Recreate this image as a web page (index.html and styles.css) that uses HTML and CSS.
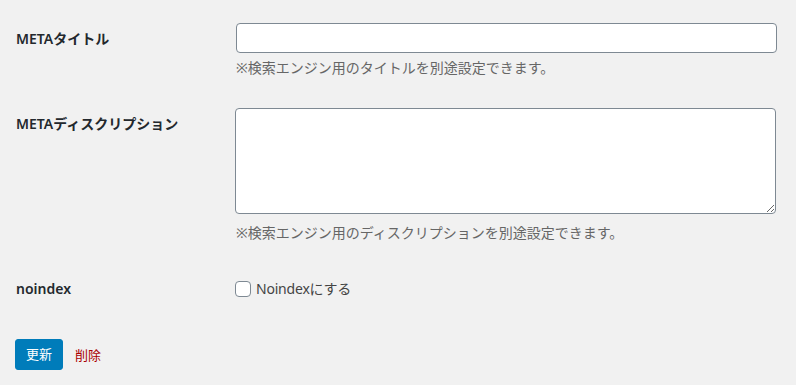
FILE: index.html
```html
<!DOCTYPE html>
<html lang="ja">
<head>
<meta charset="utf-8">
<title>META設定</title>
<link rel="stylesheet" href="styles.css">
</head>
<body>
<div class="wrap">
  <div class="form-table">
    <div class="row">
      <div class="th">METAタイトル</div>
      <div class="td">
        <input class="text-input" type="text">
        <p class="description">※検索エンジン用のタイトルを別途設定できます。</p>
      </div>
    </div>
    <div class="row">
      <div class="th">METAディスクリプション</div>
      <div class="td">
        <textarea class="text-area" rows="5"></textarea>
        <p class="description description-after-area">※検索エンジン用のディスクリプションを別途設定できます。</p>
      </div>
    </div>
    <div class="row">
      <div class="th">noindex</div>
      <div class="td td-check">
        <label class="check-label"><input class="checkbox" type="checkbox">Noindexにする</label>
      </div>
    </div>
  </div>
  <div class="submit">
    <button class="button-primary" type="button">更新</button>
    <a class="submitdelete" href="#">削除</a>
  </div>
</div>
</body>
</html>
```
FILE: styles.css
```css
html, body {
  margin: 0;
  padding: 0;
  background: #f1f1f1;
}
body {
  font-family: "Segoe UI", "Noto Sans", "Noto Sans CJK JP", sans-serif;
  font-size: 14px;
  color: #444;
}
.wrap {
  padding: 8px 9px 0 15px;
}
.row {
  display: grid;
  grid-template-columns: 211px 1fr;
}
.th {
  padding: 22px 10px 18px 1px;
  font-weight: 600;
  line-height: 1.3;
  color: #23282d;
}
.td {
  padding: 15px 10px;
}
.text-input {
  display: block;
  box-sizing: border-box;
  width: 100%;
  height: 30px;
  margin: 0;
  padding: 0 8px;
  border: 1px solid #7e8993;
  border-radius: 4px;
  background: #fff;
  font: inherit;
}
.text-area {
  display: block;
  box-sizing: border-box;
  width: 100%;
  height: 106px;
  margin: 0 0 0 -1px;
  padding: 2px 6px;
  border: 1px solid #7e8993;
  border-radius: 4px;
  background: #fff;
  font: inherit;
  line-height: 1.42857143;
}
.description {
  margin: 4px 0 0;
  line-height: 1.5;
  color: #666;
}
.description-after-area {
  margin-top: 8px;
}
.td-check {
  padding-top: 20px;
}
.check-label {
  display: flex;
  align-items: center;
  line-height: 21px;
  color: #444;
  margin-left: -1px;
  letter-spacing: -0.2px;
}
.checkbox {
  appearance: none;
  -webkit-appearance: none;
  box-sizing: border-box;
  width: 16px;
  height: 16px;
  margin: 0 5px 0 0;
  border: 1px solid #7e8993;
  border-radius: 4px;
  background: #fff;
}
.submit {
  display: flex;
  align-items: center;
  gap: 12px;
  padding-top: 23px;
}
.button-primary {
  box-sizing: border-box;
  height: 31px;
  padding: 0 10px;
  border: 1px solid #007cba;
  border-radius: 3px;
  background: #007cba;
  color: #fff;
  font: inherit;
  font-size: 13px;
  line-height: 29px;
}
.submitdelete {
  color: #a00;
  font-size: 13px;
  text-decoration: none;
}
```
